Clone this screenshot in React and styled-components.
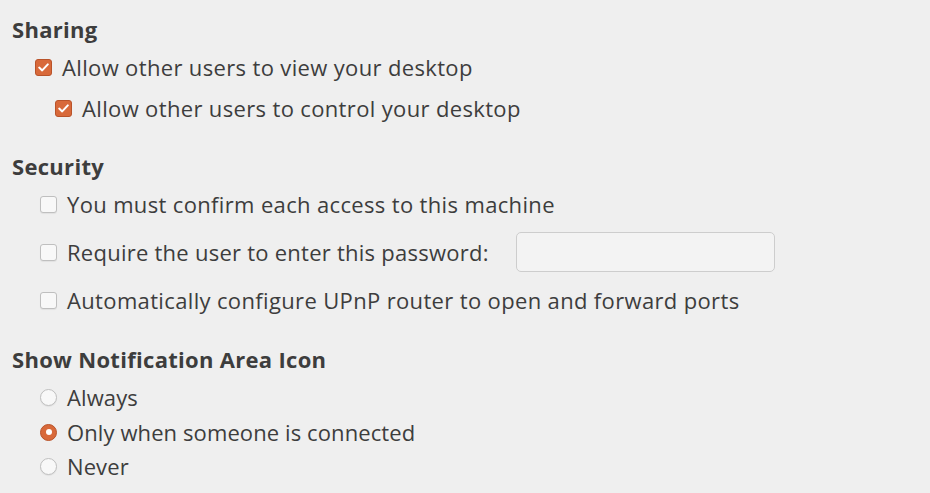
import React from 'react';
import styled, { createGlobalStyle } from 'styled-components';

// ============================================
// GLOBAL
// ============================================
const GlobalStyle = createGlobalStyle`
  html, body {
    margin: 0;
    padding: 0;
    background: #efefef;
  }
  body {
    font-family: 'Open Sans', 'Noto Sans', sans-serif;
    color: #3d3d3d;
  }
`;

const colors = {
  bg: '#efefef',
  text: '#3d3d3d',
  orange: '#d8693a',
  orangeDark: '#b9532a',
  boxBorder: '#bfbfbf',
  boxBg: '#f8f8f8',
  entryBorder: '#cdcdcd',
  entryBg: '#f3f3f3',
};

// ============================================
// STYLED COMPONENTS
// ============================================
const Page = styled.div`
  width: 930px;
  height: 493px;
  box-sizing: border-box;
  padding: 14px 0 0 12px;
  background: ${colors.bg};
  display: flex;
  flex-direction: column;
  font-size: 22px;
  letter-spacing: 0.35px;
  overflow: hidden;
`;

const Heading = styled.div`
  height: 30px;
  line-height: 30px;
  margin-top: ${p => p.$mt || 0}px;
  font-weight: 700;
  letter-spacing: 0.3px;
  color: ${colors.text};
`;

const Row = styled.label`
  display: flex;
  align-items: center;
  height: ${p => p.$h || 36}px;
  margin-top: ${p => p.$mt || 0}px;
  padding-left: ${p => p.$indent}px;
  color: ${colors.text};
  letter-spacing: ${p => p.$ls ?? 0.35}px;
  white-space: nowrap;
`;

const Box = styled.span`
  width: 17px;
  height: 17px;
  flex: none;
  box-sizing: border-box;
  border-radius: 3px;
  margin-right: 10px;
  display: flex;
  align-items: center;
  justify-content: center;
  background: ${p => (p.$checked ? colors.orange : colors.boxBg)};
  border: 1px solid ${p => (p.$checked ? colors.orangeDark : colors.boxBorder)};
  box-shadow: ${p => (p.$checked ? 'none' : '0 1px 1px rgba(0,0,0,0.06)')};
`;

const Radio = styled.span`
  width: 17px;
  height: 17px;
  flex: none;
  box-sizing: border-box;
  border-radius: 50%;
  margin-right: 10px;
  display: flex;
  align-items: center;
  justify-content: center;
  background: ${p => (p.$checked ? colors.orange : colors.boxBg)};
  border: 1px solid ${p => (p.$checked ? colors.orangeDark : colors.boxBorder)};
  box-shadow: ${p => (p.$checked ? 'none' : '0 1px 1px rgba(0,0,0,0.06)')};

  &::after {
    content: '';
    display: ${p => (p.$checked ? 'block' : 'none')};
    width: 6px;
    height: 6px;
    border-radius: 50%;
    background: #fff;
  }
`;

const Entry = styled.div`
  width: 259px;
  height: 40px;
  box-sizing: border-box;
  margin-left: 27px;
  border: 1px solid ${colors.entryBorder};
  border-radius: 5px;
  background: ${colors.entryBg};
`;

// ============================================
// COMPONENTS
// ============================================
const Check = () => (
  <svg width="11" height="9" viewBox="0 0 11 9">
    <path d="M1.2 4.6 L4.2 7.4 L9.8 1.4" fill="none" stroke="#fff" strokeWidth="2" strokeLinecap="round" strokeLinejoin="round" />
  </svg>
);

const CheckRow = ({ checked, indent, mt, h, ls, children, extra }) => (
  <Row $indent={indent} $mt={mt} $h={h} $ls={ls}>
    <Box $checked={checked}>{checked && <Check />}</Box>
    {children}
    {extra}
  </Row>
);

const RadioRow = ({ checked, mt, children }) => (
  <Row $indent={28} $mt={mt} $h={34} $ls={0.1}>
    <Radio $checked={checked} />
    {children}
  </Row>
);

const App = () => (
  <>
    <GlobalStyle />
    <Page>
      <Heading>Sharing</Heading>
      <CheckRow checked indent={23} mt={5}>Allow other users to view your desktop</CheckRow>
      <CheckRow checked indent={43} mt={5}>Allow other users to control your desktop</CheckRow>

      <Heading $mt={25}>Security</Heading>
      <CheckRow indent={28} mt={5}>You must confirm each access to this machine</CheckRow>
      <CheckRow indent={28} mt={10} h={40} ls={0.25} extra={<Entry />}>
        Require the user to enter this password:
      </CheckRow>
      <CheckRow indent={28} mt={10}>Automatically configure UPnP router to open and forward ports</CheckRow>

      <Heading $mt={26}>Show Notification Area Icon</Heading>
      <RadioRow mt={6}>Always</RadioRow>
      <RadioRow checked mt={1}>Only when someone is connected</RadioRow>
      <RadioRow>Never</RadioRow>
    </Page>
  </>
);

export default App;
